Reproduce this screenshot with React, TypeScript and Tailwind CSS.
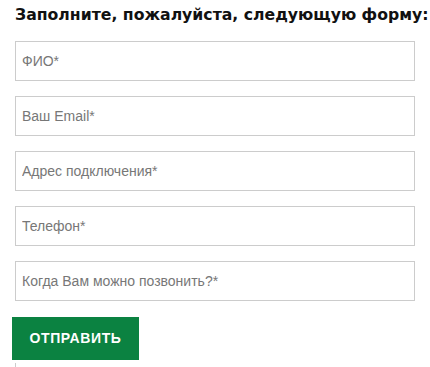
export default function App() {
  const fields = ["ФИО*", "Ваш Email*", "Адрес подключения*", "Телефон*", "Когда Вам можно позвонить?*"];

  return (
    <div className="w-[430px] h-[367px] bg-white overflow-hidden">
      <h2 className="pl-[15px] pt-[5px] text-[15.7px] leading-[19px] font-bold text-[#111] whitespace-nowrap font-['DejaVu_Sans',sans-serif]">
        Заполните, пожалуйста, следующую форму:
      </h2>

      <form className="mt-[17px] flex flex-col" onSubmit={(e) => e.preventDefault()}>
        <div className="flex flex-col gap-[15px] pl-[15px]">
          {fields.map((f) => (
            <input
              key={f}
              type="text"
              placeholder={f}
              className="w-[400px] h-[40px] border border-[#cccccc] bg-white px-[6px] text-[14px] text-[#555] placeholder:text-[#777] outline-none font-['Liberation_Sans',Arial,sans-serif]"
            />
          ))}
        </div>

        <div className="pl-[12px] mt-[16px]">
          <button
            type="submit"
            className="w-[127px] h-[43px] bg-[#0b8241] text-white text-[14px] font-bold tracking-[0.6px] font-['Liberation_Sans',Arial,sans-serif]"
          >
            ОТПРАВИТЬ
          </button>
        </div>
        <div className="ml-[15px] mt-[3px] w-px h-[5px] bg-[#ccc]" />
      </form>
    </div>
  );
}
